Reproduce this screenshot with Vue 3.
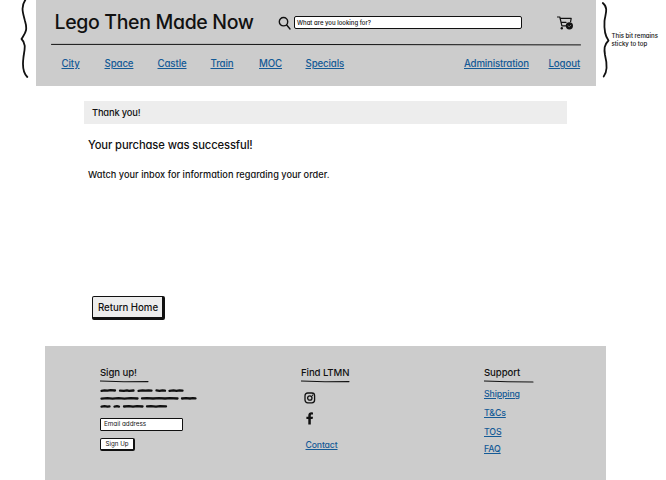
<script setup>
const categories = [
  { label: 'City', cls: 'city' },
  { label: 'Space', cls: 'space' },
  { label: 'Castle', cls: 'castle' },
  { label: 'Train', cls: 'train' },
  { label: 'MOC', cls: 'moc' },
  { label: 'Specials', cls: 'specials' },
]
const support = ['Shipping', 'T&Cs', 'TOS', 'FAQ']
</script>

<template>
  <div class="page">
    <div class="top">
      <svg class="brace left" width="36" height="86" viewBox="0 0 36 86">
        <path d="M25.3 0C20.5 7 23 13 25 21C28 31 25 33 21.5 39C27 44 24 51 23.4 58C22.5 65 23 73 27.3 77" />
      </svg>
      <header class="header">
        <div class="brand-row">
          <h1>Lego Then Made Now</h1>
          <svg class="magnifier" width="14" height="14" viewBox="0 0 14 14">
            <circle cx="5.5" cy="5.7" r="4.2" />
            <path d="M8.7 9L12 13" />
          </svg>
          <div class="search"><span>What are you looking for?</span></div>
          <svg class="cart" width="17" height="15" viewBox="0 0 17 15">
            <path d="M.5 1H2.8L4.9 9.8H9M3.4 2.4H14.2L13.6 5.6M4.3 6.4H9" />
            <circle class="solid" cx="4.8" cy="12.3" r="1.2" />
            <circle class="solid" cx="12.4" cy="9.8" r="3.6" />
            <path class="mark" d="M11 9.8L12.2 10.8L13.8 9.2" />
          </svg>
        </div>
        <svg class="rule" width="530" height="3" viewBox="0 0 530 3">
          <path d="M.5 1.4L170 1.4L330 1.6L529.5 1.9" />
        </svg>
        <nav>
          <a v-for="c in categories" :key="c.label" :class="c.cls"><span>{{ c.label }}</span></a>
          <a class="admin">Administration</a>
          <a class="logout">Logout</a>
        </nav>
      </header>
      <svg class="brace" width="15" height="86" viewBox="0 0 15 86">
        <path d="M6.8 3C13 8 9 15 8.5 21C8 29 9 36 12.5 40.5C8 45 8 49 9 55C11 63 12 71 7.7 76.5" />
      </svg>
      <p class="note">This bit remains<br />sticky to top</p>
    </div>

    <main>
      <div class="banner">Thank you!</div>
      <h2>Your purchase was successful!</h2>
      <p class="message">Watch your inbox for information regarding your order.</p>
      <button class="home">Return Home</button>
    </main>

    <footer>
      <section class="signup">
        <h3>Sign up!</h3>
        <svg class="underline" width="50" height="3" viewBox="0 0 50 3"><path d="M0 1L24 1.7L48 1.6" /></svg>
        <svg class="scribble" width="98" height="22" viewBox="0 0 98 22">
          <path d="M1.5 3.8l3-.5 3 .4 3-.5 4.5.3M20 3.6l4 .3 3-.5 2 .4 4.5-.3M38.5 3.8l4-.5 3 .4 3-.4 3 .3M56.5 3.4l3 .4 3-.5 2.5 .4M69.5 3.8l4-.4 3 .4 3-.4 3 .3" />
          <path d="M1.5 11.6l6-.4 5 .4 6-.4 6 .4 6-.4 7 .3M42 11.4l5-.3 6 .4 6-.4 6 .4 5-.4 7.5.4M82 11.5l4-.4 4 .4 3-.4 2.5.3" />
          <path d="M1.5 19.6l3-.4 3 .4 2-.3M14.5 19.6l2.5-.4 2 .4M24 19.5l5-.4 4 .6 4-.5 5.5.3M47 19.4l4-.3 5 .5 4-.5 6 .3" />
        </svg>
        <div class="email"><span>Email address</span></div>
        <button class="join">Sign Up</button>
      </section>
      <section class="find">
        <h3>Find LTMN</h3>
        <svg class="underline" width="50" height="3" viewBox="0 0 50 3"><path d="M0 1L24 1.7L48 1.6" /></svg>
        <svg class="insta" width="12" height="12" viewBox="0 0 12 12">
          <rect x="1" y="1" width="9.6" height="9.8" rx="2.7" />
          <circle cx="5.8" cy="6" r="2.2" />
          <circle class="solid" cx="8.5" cy="3.3" r=".7" />
        </svg>
        <svg class="facebook" width="8" height="13" viewBox="0 0 8 13">
          <path d="M2.3 12.6V7H.4V4.8H2.3V3.4C2.3 1.3 3.6.3 5.4.3L7 .5V2.4H6C5 2.4 4.8 2.9 4.8 3.6V4.8H7L6.6 7H4.8V12.6Z" />
        </svg>
        <a>Contact</a>
      </section>
      <section class="support">
        <h3>Support</h3>
        <svg class="underline" width="50" height="3" viewBox="0 0 50 3"><path d="M0 1L24 1.7L49 2" /></svg>
        <a v-for="s in support" :key="s">{{ s }}</a>
      </section>
    </footer>
  </div>
</template>

<style>
body { background: #fff; overflow: hidden; }
</style>

<style scoped>
* { box-sizing: border-box; }
.page {
  width: 666px; height: 480px; overflow: hidden; color: #111;
  display: flex; flex-direction: column;
  font-family: Inter, "Liberation Sans", sans-serif;
  font-feature-settings: "cv11";
}
h1, h2, h3, p { margin: 0; font-weight: 400; white-space: nowrap; }
svg { display: block; flex: none; fill: none; stroke: #111; stroke-linecap: round; stroke-linejoin: round; }
a { color: #145a96; text-decoration: underline; text-underline-offset: 1px; text-decoration-thickness: 1px; white-space: nowrap; font-weight: 500; }
button { font: inherit; font-feature-settings: inherit; color: inherit; padding: 0; white-space: nowrap; }

.top { display: flex; height: 86px; }
.brace { stroke-width: 1.8; }
.header { width: 560px; height: 86px; background: #ccc; }
.brand-row { display: flex; align-items: flex-start; height: 43px; padding-left: 18.5px; }
h1 { width: 223.5px; padding-top: 10px; font-size: 19.5px; line-height: 24px; font-weight: 500; letter-spacing: -.34px; }
.magnifier { margin-top: 16px; stroke-width: 1.4; }
.search {
  margin: 16px 0 0 2px; width: 228px; height: 13px; border: 1.5px solid #111; border-radius: 2px;
  background: #fff; padding-left: 2px; font-size: 6px; line-height: 11px; font-weight: 500;
}
.cart { margin: 15.5px 0 0 35px; stroke-width: 1.2; }
.solid { fill: #111; stroke: none; }
.mark { stroke: #999; stroke-width: .7; }
.rule { margin-left: 15px; stroke-width: 1; }
nav { display: flex; padding: 12px 0 0 25.5px; font-size: 9.7px; line-height: 12px; letter-spacing: -.12px; }
.city { width: 43px; }
.space { width: 53px; }
.castle { width: 53px; }
.train { width: 48.5px; }
.moc { width: 46.5px; }
.specials { width: 158.5px; }
.admin { width: 84.5px; letter-spacing: -.2px; }
.note { padding: 32px 0 0 .5px; font-size: 6.1px; line-height: 7.6px; font-weight: 500; }

main { height: 260px; padding: 15px 0 0 84px; display: flex; flex-direction: column; align-items: flex-start; }
.banner { width: 483px; height: 23px; background: #ededed; padding-left: 8px; font-size: 9.3px; line-height: 23px; font-weight: 500; letter-spacing: -.15px; }
h2 { margin: 13px 0 0 4px; font-size: 11.2px; line-height: 16px; font-weight: 500; letter-spacing: -.1px; }
.message { margin: 15px 0 0 4px; font-size: 9.2px; line-height: 14px; font-weight: 500; letter-spacing: .02px; }
.home {
  margin: 114px 0 0 8px; width: 73px; height: 24px; background: #ededed; font-size: 9.7px; font-weight: 500;
  border: solid #111; border-width: 1.5px 3px 3px 1.5px; border-radius: 2px; padding: 1px 0 0 1px; letter-spacing: -.05px;
}

footer { width: 561px; height: 134px; margin-left: 44.5px; padding: 20px 0 0 55.5px; background: #ccc; display: flex; }
section { display: flex; flex-direction: column; align-items: flex-start; }
h3 { font-size: 9.6px; line-height: 13px; font-weight: 500; letter-spacing: -.08px; }
.underline { margin-top: 1px; stroke-width: 1.1; }
.signup { width: 201px; }
.find { width: 183px; }
.scribble { margin-top: 4px; stroke-width: 2.3; }
.email { margin-top: 9px; width: 83px; height: 13px; border: 1.5px solid #111; background: #fff; padding-left: 3px; font-size: 6.3px; line-height: 10.5px; border-radius: 1px; }
.join { margin-top: 7px; width: 35px; height: 13px; background: #fff; border: solid #111; border-width: 1.2px 2.5px 2.5px 1.2px; border-radius: 2px; font-size: 6.2px; line-height: 10px; }
.insta { margin: 9px 0 0 3px; stroke-width: 1.3; }
.facebook { margin: 8px 0 0 5px; fill: #111; stroke: none; }
.find a { margin: 14px 0 0 4.5px; font-size: 8.7px; line-height: 12px; letter-spacing: -.15px; }
.support a { font-size: 8.8px; line-height: 12px; margin-top: 7px; letter-spacing: -.15px; }
.support .underline + a { margin-top: 5px; }
.support a:last-child { margin-top: 5px; }
</style>
